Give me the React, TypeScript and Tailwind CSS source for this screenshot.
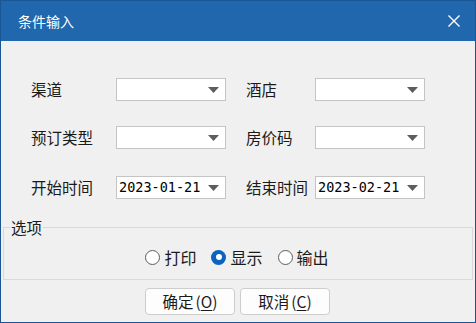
import React from "react";

const cjk = { fontFamily: '"Noto Sans CJK SC", "Microsoft YaHei", sans-serif' };
const mono = { fontFamily: '"DejaVu Sans Mono", "Liberation Mono", monospace' };

function Arrow() {
  return (
    <svg width="11" height="6" viewBox="0 0 11 6" className="shrink-0">
      <polygon points="0,0 11,0 5.5,6" fill="#5a6058" />
    </svg>
  );
}

function Combo({ value }: { value?: string }) {
  return (
    <div className="w-[110px] h-[23px] bg-white border border-[#c4c4c4] flex items-center pl-[2px] pr-[6px]">
      <span className="flex-1 text-[13.5px] leading-none text-black" style={mono}>
        {value ?? ""}
      </span>
      <Arrow />
    </div>
  );
}

function Label({ text, w }: { text: string; w: string }) {
  return (
    <div className={`${w} text-[15.5px] leading-none text-[#1a1a1a]`}>{text}</div>
  );
}

function Radio({ checked, label }: { checked?: boolean; label: string }) {
  return (
    <div className="flex items-center gap-[4px]">
      {checked ? (
        <div className="w-[15px] h-[15px] rounded-full bg-[#0a63bf] flex items-center justify-center">
          <div className="w-[6px] h-[6px] rounded-full bg-white" />
        </div>
      ) : (
        <div className="w-[15px] h-[15px] rounded-full bg-white border border-[#5c5c5c]" />
      )}
      <span className="text-[16px] leading-none text-[#1a1a1a]">{label}</span>
    </div>
  );
}

function Btn({ a, k }: { a: string; k: string }) {
  return (
    <div className="w-[90px] h-[27px] rounded-[4px] border border-[#cdcdcd] bg-[#fdfdfd] flex items-center justify-center text-[15.5px] leading-none text-[#1a1a1a]">
      {a}
      <span className="ml-[2px]">(</span>
      <span className="underline underline-offset-2">{k}</span>
      <span>)</span>
    </div>
  );
}

export default function App() {
  return (
    <div className="w-[476px] h-[323px] bg-[#f0f0f0] flex flex-col border-x border-b border-[#1b5592] overflow-hidden" style={cjk}>
      <div className="h-[41px] bg-[#2067ae] border-t border-[#1b5592] flex items-center pl-[17px] pr-[15px] shrink-0">
        <span className="flex-1 text-white text-[14px] leading-none">条件输入</span>
        <svg width="12" height="12" viewBox="0 0 12 12">
          <path d="M0.5 0.5 L11.5 11.5 M11.5 0.5 L0.5 11.5" stroke="white" strokeWidth="1.4" />
        </svg>
      </div>
      <div className="flex flex-col pl-[30px] pt-[37px]">
        <div className="flex items-center h-[23px]">
          <Label text="渠道" w="w-[85px]" />
          <Combo />
          <div className="w-[20px]" />
          <Label text="酒店" w="w-[69px]" />
          <Combo />
        </div>
        <div className="flex items-center h-[23px] mt-[25px]">
          <Label text="预订类型" w="w-[85px]" />
          <Combo />
          <div className="w-[20px]" />
          <Label text="房价码" w="w-[69px]" />
          <Combo />
        </div>
        <div className="flex items-center h-[23px] mt-[27px]">
          <Label text="开始时间" w="w-[85px]" />
          <Combo value="2023-01-21" />
          <div className="w-[20px]" />
          <Label text="结束时间" w="w-[69px]" />
          <Combo value="2023-02-21" />
        </div>
      </div>
      <fieldset className="mx-[2px] mt-[19px] h-[62px] border border-[#d9d9d9]">
        <legend className="ml-[6px] px-[1px] text-[15.5px] leading-[18px] text-[#1a1a1a]">选项</legend>
        <div className="flex items-center justify-center gap-[15px] pt-[13px] pr-[2px]">
          <Radio label="打印" />
          <Radio checked label="显示" />
          <Radio label="输出" />
        </div>
      </fieldset>
      <div className="flex justify-center gap-[5px] mt-[8px] pr-[1px]">
        <Btn a="确定" k="O" />
        <Btn a="取消" k="C" />
      </div>
    </div>
  );
}
